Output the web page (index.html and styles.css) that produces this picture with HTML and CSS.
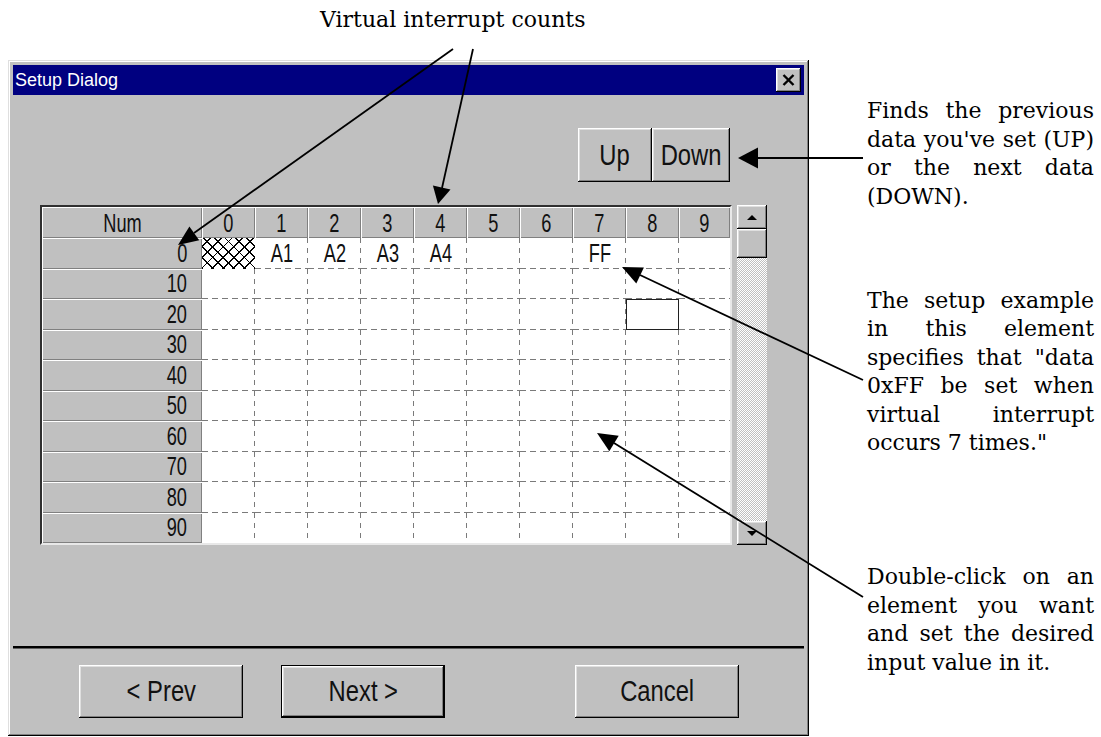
FILE: index.html
```html
<!DOCTYPE html>
<html lang="en">
<head>
  <meta charset="UTF-8" />
  <title>Setup Dialog</title>
  <link rel="stylesheet" href="styles.css">
</head>
<body>

  <div class="page">
    <div class="main">
      <div class="caption">Virtual interrupt counts</div>

      <div class="dialog">
        <div class="titlebar">
          <span class="title">Setup Dialog</span>
          <span class="close">
            <svg width="13" height="12" viewBox="0 0 13 12"><path d="M1.5 1 L11.5 11 M11.5 1 L1.5 11" stroke="#000" stroke-width="2.4"/></svg>
          </span>
        </div>

        <div class="client">
          <div class="panel">
            <div class="toolbar">
              <button class="btn btn-up"><span class="t">Up</span></button>
              <button class="btn btn-down"><span class="t">Down</span></button>
            </div>

            <div class="grid-area">
              <div class="grid-frame">
                <div class="grid">
                  <div class="hd"><span class="t">Num</span></div><div class="hd"><span class="t">0</span></div><div class="hd"><span class="t">1</span></div><div class="hd"><span class="t">2</span></div><div class="hd"><span class="t">3</span></div><div class="hd"><span class="t">4</span></div><div class="hd"><span class="t">5</span></div><div class="hd"><span class="t">6</span></div><div class="hd"><span class="t">7</span></div><div class="hd"><span class="t">8</span></div><div class="hd"><span class="t">9</span></div>
                  <div class="rh"><span class="t">0</span></div><div class="c hatch"></div><div class="c"><span class="t">A1</span></div><div class="c"><span class="t">A2</span></div><div class="c"><span class="t">A3</span></div><div class="c"><span class="t">A4</span></div><div class="c"></div><div class="c"></div><div class="c"><span class="t">FF</span></div><div class="c"></div><div class="c"></div>
                  <div class="rh"><span class="t">10</span></div><div class="c"></div><div class="c"></div><div class="c"></div><div class="c"></div><div class="c"></div><div class="c"></div><div class="c"></div><div class="c"></div><div class="c"></div><div class="c"></div>
                  <div class="rh"><span class="t">20</span></div><div class="c"></div><div class="c"></div><div class="c"></div><div class="c"></div><div class="c"></div><div class="c"></div><div class="c"></div><div class="c"></div><div class="c sel"></div><div class="c"></div>
                  <div class="rh"><span class="t">30</span></div><div class="c"></div><div class="c"></div><div class="c"></div><div class="c"></div><div class="c"></div><div class="c"></div><div class="c"></div><div class="c"></div><div class="c"></div><div class="c"></div>
                  <div class="rh"><span class="t">40</span></div><div class="c"></div><div class="c"></div><div class="c"></div><div class="c"></div><div class="c"></div><div class="c"></div><div class="c"></div><div class="c"></div><div class="c"></div><div class="c"></div>
                  <div class="rh"><span class="t">50</span></div><div class="c"></div><div class="c"></div><div class="c"></div><div class="c"></div><div class="c"></div><div class="c"></div><div class="c"></div><div class="c"></div><div class="c"></div><div class="c"></div>
                  <div class="rh"><span class="t">60</span></div><div class="c"></div><div class="c"></div><div class="c"></div><div class="c"></div><div class="c"></div><div class="c"></div><div class="c"></div><div class="c"></div><div class="c"></div><div class="c"></div>
                  <div class="rh"><span class="t">70</span></div><div class="c"></div><div class="c"></div><div class="c"></div><div class="c"></div><div class="c"></div><div class="c"></div><div class="c"></div><div class="c"></div><div class="c"></div><div class="c"></div>
                  <div class="rh"><span class="t">80</span></div><div class="c"></div><div class="c"></div><div class="c"></div><div class="c"></div><div class="c"></div><div class="c"></div><div class="c"></div><div class="c"></div><div class="c"></div><div class="c"></div>
                  <div class="rh"><span class="t">90</span></div><div class="c"></div><div class="c"></div><div class="c"></div><div class="c"></div><div class="c"></div><div class="c"></div><div class="c"></div><div class="c"></div><div class="c"></div><div class="c"></div>
                </div>
              </div>

              <div class="scrollbar">
                <div class="sb-btn"><span class="tri-up"></span></div>
                <div class="sb-thumb"></div>
                <div class="sb-track"></div>
                <div class="sb-btn"><span class="tri-down"></span></div>
              </div>
            </div>
          </div>

          <div class="separator"></div>

          <div class="actions">
            <button class="btn btn-wide btn-prev"><span class="t">&lt; Prev</span></button>
            <button class="btn btn-wide btn-default btn-next"><span class="t">Next &gt;</span></button>
            <button class="btn btn-wide btn-cancel"><span class="t">Cancel</span></button>
          </div>
        </div>
      </div>
    </div>

    <div class="notes">
      <p class="note note-find">Finds the previous data you've set (UP) or the next data (DOWN).</p>
      <p class="note note-example">The setup example in this element specifies that "data 0xFF be set when virtual interrupt occurs 7 times."</p>
      <p class="note note-edit">Double-click on an element you want and set the desired input value in it.</p>
    </div>
  </div>

  <!-- callout arrows -->
  <svg class="arrows" width="1101" height="737" viewBox="0 0 1101 737">
    <g stroke="#000" stroke-width="1.8" fill="none">
      <line x1="453" y1="49" x2="194" y2="233"/>
      <line x1="473" y1="49" x2="442" y2="188"/>
      <line x1="863" y1="158" x2="758" y2="158"/>
      <line x1="863" y1="380" x2="640" y2="275"/>
      <line x1="863" y1="597" x2="614" y2="443"/>
    </g>
    <g fill="#000">
      <polygon points="178,245 199.2,240.3 189.4,226.5"/>
      <polygon points="438,204 450.5,189.4 432.9,185.4"/>
      <polygon points="738,158 758,147.5 758,168.5"/>
      <polygon points="622,267 636.3,283.6 643.9,267.4"/>
      <polygon points="597,433 609.3,451.2 618.7,435.8"/>
    </g>
  </svg>

</body>
</html>
```

FILE: styles.css
```css
* {
  box-sizing: border-box;
}

html,
body {
  margin: 0;
  padding: 0;
  background: #fff;
  overflow: hidden;
}

body {
  width: 1101px;
  height: 737px;
  position: relative;
}

.page {
  display: flex;
  align-items: flex-start;
}

.main {
  width: 809px;
}

.caption {
  height: 60px;
  padding: 6px 0 0 320px;
  font-family: "DejaVu Serif", serif;
  font-size: 22px;
  line-height: 28px;
  color: #000;
}

/* window */

.dialog {
  margin-left: 8px;
  width: 801px;
  padding: 5px;
  background: #c0c0c0;
  box-shadow: inset -1px -1px #000, inset 1px 1px #dfdfdf,
              inset -2px -2px #808080, inset 2px 2px #fff;
  font-family: "Liberation Sans", Arial, sans-serif;
}

/* the original UI font is a tall narrow one, squeeze Liberation Sans */
.t {
  display: inline-block;
  white-space: nowrap;
  transform: scaleX(0.7);
}

.titlebar {
  height: 30px;
  background: #000080;
  display: flex;
  align-items: center;
  justify-content: space-between;
  padding: 0 3px 0 2px;
}

.title {
  color: #fff;
  font-size: 18px;
}

.close {
  width: 25px;
  height: 24px;
  background: #c0c0c0;
  display: flex;
  align-items: center;
  justify-content: center;
  box-shadow: inset -1px -1px #000, inset 1px 1px #fff,
              inset -2px -2px #808080, inset 2px 2px #dfdfdf;
}

.client {
  padding-bottom: 13px;
}

.panel {
  margin-left: 27px;
  width: 727px;
}

.toolbar {
  display: flex;
  justify-content: flex-end;
  margin-top: 33px;
  padding-right: 37px;
}

.btn {
  font-family: inherit;
  font-size: 29px;
  color: #111;
  background: #c0c0c0;
  border: none;
  padding: 0;
  margin: 0;
  box-shadow: inset -1px -1px #000, inset 1px 1px #fff,
              inset -2px -2px #808080, inset 2px 2px #dfdfdf;
}

.btn .t {
  transform: scaleX(0.82);
}

.btn-up {
  width: 74px;
  height: 54px;
}

.btn-down {
  width: 78px;
  height: 54px;
}

/* grid */

.grid-area {
  display: flex;
  margin-top: 23px;
}

.grid-frame {
  border: 2px solid;
  border-color: #303030 #e8e8e8 #e8e8e8 #303030;
}

.grid {
  display: grid;
  grid-template-columns: 160px repeat(9, 53px) 51px;
  grid-template-rows: 31px repeat(10, 30.5px);
  font-size: 26px;
  color: #111;
}

.hd,
.rh {
  background: #c0c0c0;
  box-shadow: inset 1px 1px #fff, inset -1px -1px #808080;
  display: flex;
  align-items: center;
}

.hd {
  justify-content: center;
  padding-top: 2px;
}

.rh {
  justify-content: flex-end;
  padding-right: 15px;
}

.rh .t {
  transform-origin: right center;
}

.c {
  display: flex;
  align-items: center;
  justify-content: center;
  background:
    linear-gradient(90deg, #7a7a7a 6px, transparent 0) left bottom / 10px 1px repeat-x,
    linear-gradient(#7a7a7a 5px, transparent 0) right top / 1px 10px repeat-y,
    #fff;
}

.c:nth-child(11n) {
  background-size: 10px 1px, 0 0;
}

.c:nth-last-child(-n+10) {
  background-size: 0 0, 1px 10px;
}

.c:nth-child(11n):nth-last-child(1) {
  background-size: 0 0, 0 0;
}

.c.hatch {
  background:
    repeating-linear-gradient(45deg, #000 0 1.3px, transparent 1.3px 7.5px),
    repeating-linear-gradient(-45deg, #000 0 1.3px, #fff 1.3px 7.5px);
}

.c.sel {
  box-shadow: inset 0 0 0 1px #202020;
}

/* scrollbar */

.scrollbar {
  width: 30px;
  margin-left: 5px;
  display: flex;
  flex-direction: column;
}

.sb-btn,
.sb-thumb {
  background: #c0c0c0;
  box-shadow: inset -1px -1px #000, inset 1px 1px #fff,
              inset -2px -2px #808080, inset 2px 2px #dfdfdf;
}

.sb-btn {
  height: 24px;
  display: flex;
  align-items: center;
  justify-content: center;
}

.sb-thumb {
  height: 29px;
}

.sb-track {
  flex: 1;
  background: repeating-conic-gradient(#fff 0 25%, #c0c0c0 0 50%) 0 0 / 2px 2px;
}

.tri-up {
  border-left: 5px solid transparent;
  border-right: 5px solid transparent;
  border-bottom: 5px solid #000;
}

.tri-down {
  border-left: 5px solid transparent;
  border-right: 5px solid transparent;
  border-top: 5px solid #000;
}

/* bottom buttons */

.separator {
  margin-top: 101px;
  height: 3px;
  border-top: 2px solid #000;
  border-bottom: 1px solid #606060;
}

.actions {
  display: flex;
  margin-top: 16px;
  padding-left: 66px;
}

.btn-wide {
  width: 164px;
  height: 53px;
}

.btn-default {
  border: 1px solid #000;
}

.btn-next {
  margin-left: 38px;
}

.btn-cancel {
  margin-left: 130px;
}

/* annotations */

.notes {
  margin-left: 58px;
  width: 227px;
  font-family: "DejaVu Serif", serif;
  font-size: 22px;
  line-height: 28.5px;
  color: #000;
}

.note {
  margin: 0;
  text-align: justify;
}

.note-find {
  margin-top: 97px;
}

.note-example {
  margin-top: 76px;
  line-height: 28.4px;
}

.note-edit {
  margin-top: 106px;
}

.arrows {
  position: absolute;
  left: 0;
  top: 0;
  pointer-events: none;
}
```
